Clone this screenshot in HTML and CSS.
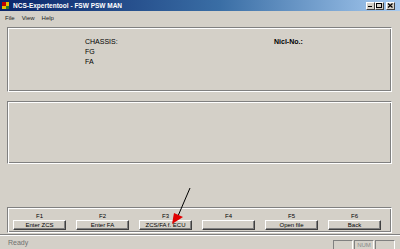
FILE: index.html
```html
<!DOCTYPE html>
<html>
<head>
<meta charset="utf-8">
<link rel="stylesheet" href="styles.css">
</head>
<body>
<div class="window">
  <div class="titlebar">
    <div class="appicon"><span class="ic-a"></span><span class="ic-b"></span></div>
    <div class="title">NCS-Expertentool - FSW PSW MAN</div>
    <div class="caption-btns">
      <div class="cbtn"><svg width="9" height="7" viewBox="0 0 9 7"><rect x="2" y="4" width="4" height="1" fill="#000"/></svg></div>
      <div class="cbtn"><svg width="9" height="7" viewBox="0 0 9 7"><rect x="1.5" y="1.5" width="5" height="4" fill="none" stroke="#000"/><rect x="1" y="1" width="6" height="1" fill="#000"/></svg></div>
      <div class="cbtn close"><svg width="9" height="7" viewBox="0 0 9 7"><path d="M2 1.5 L6.5 5.5 M6.5 1.5 L2 5.5" stroke="#000" stroke-width="1.2"/></svg></div>
    </div>
  </div>
  <div class="menubar">
    <span class="menu">File</span>
    <span class="menu">View</span>
    <span class="menu">Help</span>
  </div>
  <div class="client">
    <div class="panel info">
      <div class="col-left">
        <div class="line">CHASSIS:</div>
        <div class="line">FG</div>
        <div class="line">FA</div>
      </div>
      <div class="col-right">
        <div class="line bold">Nicl-No.:</div>
      </div>
    </div>
    <div class="panel empty"></div>
    <div class="spacer"></div>
    <div class="group">
      <div class="fkey"><div class="flabel">F1</div><div class="btn">Enter ZCS</div></div>
      <div class="fkey"><div class="flabel">F2</div><div class="btn">Enter FA</div></div>
      <div class="fkey"><div class="flabel">F3</div><div class="btn">ZCS/FA f. ECU</div></div>
      <div class="fkey"><div class="flabel">F4</div><div class="btn"></div></div>
      <div class="fkey"><div class="flabel">F5</div><div class="btn">Open file</div></div>
      <div class="fkey"><div class="flabel">F6</div><div class="btn">Back</div></div>
    </div>
  </div>
  <div class="statusbar">
    <div class="status-main">Ready</div>
    <div class="spane"></div>
    <div class="spane num">NUM</div>
    <div class="spane"></div>
  </div>
  <svg class="arrow" width="400" height="249" viewBox="0 0 400 249">
    <line x1="190" y1="188" x2="178" y2="216" stroke="#000" stroke-width="1"/>
    <polygon points="172,224 174,213 183,217" fill="#e00000"/>
  </svg>
</div>
</body>
</html>
```
FILE: styles.css
```css
* { box-sizing: border-box; }
html, body { margin: 0; padding: 0; }
body {
  width: 400px;
  height: 249px;
  overflow: hidden;
  background: #d4d0c8;
  font-family: "Liberation Sans", "DejaVu Sans", sans-serif;
  color: #000;
}
.window {
  position: relative;
  width: 400px;
  height: 249px;
  display: flex;
  flex-direction: column;
  background: #d4d0c8;
}
.titlebar {
  height: 11px;
  display: flex;
  align-items: center;
  background: linear-gradient(to right, #0a246a 0%, #3a6ea5 55%, #a6caf0 100%);
  padding-left: 2px;
}
.appicon {
  width: 7px;
  height: 7px;
  position: relative;
  display: flex;
  flex-wrap: wrap;
  background: #e8c000;
}
.ic-a { width: 4px; height: 4px; background: #c00000; }
.ic-b { width: 3px; height: 3px; background: #2a7a2a; margin-top: 4px; }
.title {
  margin-left: 4px;
  color: #fff;
  font-weight: bold;
  font-size: 6.5px;
  white-space: nowrap;
  flex: 1;
}
.caption-btns {
  display: flex;
  margin-right: 5px;
}
.cbtn {
  width: 9px;
  height: 8px;
  background: #d4d0c8;
  border-top: 1px solid #fff;
  border-left: 1px solid #fff;
  border-right: 1px solid #404040;
  border-bottom: 1px solid #404040;
  display: flex;
  align-items: center;
  justify-content: center;
  overflow: hidden;
}
.cbtn svg { display: block; flex: none; }
.cbtn.close { margin-left: 2px; }
.menubar {
  height: 13px;
  display: flex;
  align-items: center;
  padding-left: 5px;
  font-size: 6px;
  color: #222;
}
.menu { margin-right: 7px; }
.client {
  flex: 1;
  display: flex;
  flex-direction: column;
  padding: 3px 8px 1px 7px;
}
.panel {
  border-top: 1px solid #808080;
  border-left: 1px solid #808080;
  border-right: 1px solid #fff;
  border-bottom: 1px solid #fff;
  box-shadow: inset 1px 1px 0 #fff, inset -1px -1px 0 #808080;
}
.panel.info {
  height: 65px;
  display: flex;
  padding-top: 9px;
  font-size: 7px;
}
.col-left { margin-left: 77px; width: 189px; }
.line { height: 10px; line-height: 10px; }
.bold { font-weight: bold; }
.panel.empty {
  height: 63px;
  margin-top: 9px;
}
.spacer { flex: 1; }
.group {
  height: 26px;
  border-top: 1px solid #808080;
  border-left: 1px solid #808080;
  border-right: 1px solid #fff;
  border-bottom: 1px solid #fff;
  box-shadow: inset 1px 1px 0 #fff, inset -1px -1px 0 #808080;
  display: flex;
  gap: 10px;
  padding-left: 5px;
  padding-top: 4px;
}
.fkey {
  display: flex;
  flex-direction: column;
  align-items: center;
  width: 53px;
}
.flabel {
  font-size: 6px;
  height: 8px;
  line-height: 8px;
}
.btn {
  width: 100%;
  height: 10px;
  background: #d4d0c8;
  border-top: 1px solid #fff;
  border-left: 1px solid #fff;
  border-right: 1px solid #404040;
  border-bottom: 1px solid #404040;
  box-shadow: inset -1px -1px 0 #808080;
  font-size: 6px;
  line-height: 8px;
  text-align: center;
  white-space: nowrap;
  overflow: hidden;
}
.statusbar {
  height: 15px;
  border-top: 1px solid #808080;
  box-shadow: inset 0 1px 0 #fff;
  display: flex;
  align-items: flex-end;
  padding: 0 5px 0 0;
}
.status-main {
  flex: 1;
  font-size: 7px;
  color: #707070;
  padding-left: 8px;
  align-self: center;
}
.spane {
  width: 20px;
  height: 9px;
  border-top: 1px solid #808080;
  border-left: 1px solid #808080;
  border-right: 1px solid #fff;
  font-size: 6px;
  color: #888;
  text-align: center;
  line-height: 8px;
  margin-left: 1px;
}
.arrow {
  position: absolute;
  left: 0;
  top: 0;
  pointer-events: none;
}
```
